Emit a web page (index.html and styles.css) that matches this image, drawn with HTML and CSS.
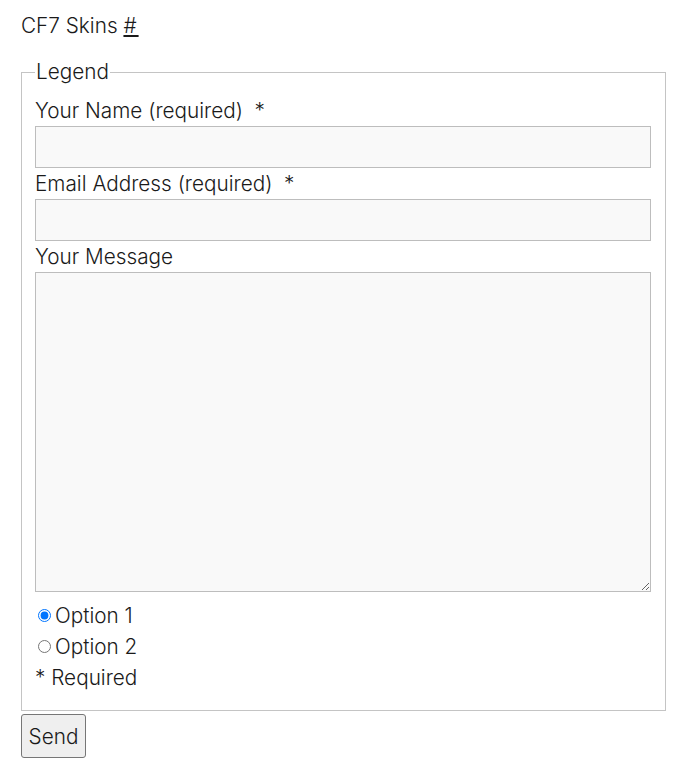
FILE: index.html
```html
<!DOCTYPE html>
<html>
<head>
<meta charset="utf-8">
<link rel="stylesheet" href="styles.css">
</head>
<body>
<div class="page">
  <h2 class="title">CF7 Skins <a href="#" class="anchor">#</a></h2>
  <form class="form">
    <fieldset class="set">
      <legend class="legend">Legend</legend>
      <label class="label">Your Name (required) &nbsp;*</label>
      <input class="field" type="text">
      <label class="label">Email Address (required) &nbsp;*</label>
      <input class="field" type="text">
      <label class="label">Your Message</label>
      <textarea class="area"></textarea>
      <div class="options">
        <label class="opt"><input type="radio" name="o" checked class="radio">Option 1</label>
        <label class="opt"><input type="radio" name="o" class="radio">Option 2</label>
      </div>
      <p class="req">* Required</p>
    </fieldset>
    <button type="button" class="send">Send</button>
  </form>
</div>
</body>
</html>
```
FILE: styles.css
```css
html, body { margin: 0; padding: 0; background: #fff; }
body {
  font-family: Inter, "Noto Sans", sans-serif;
  font-weight: 300;
  color: #1a1a1a;
  font-size: 20.75px;
}
.page { padding: 10px 18px 0 21px; }
.title {
  margin: 0 0 17px;
  font-size: 20.75px;
  font-weight: 300;
  line-height: 31px;
}
.anchor { color: #1a1a1a; text-decoration: underline; letter-spacing: 2px; }
.form { margin: 0; }
.set {
  margin: 0 0 3px;
  border: 1px solid #c4c4c4;
  padding: 9px 14px 17px 13px;
}
.legend { padding: 0 1px; line-height: 28px; }
.label { display: block; line-height: 31px; }
.field, .area {
  display: block;
  box-sizing: border-box;
  width: 100%;
  border: 1px solid #bdbdbd;
  background: #f9f9f9;
  margin: 0;
  font: inherit;
}
.field { height: 42px; }
.area { height: 320px; resize: vertical; margin-bottom: 8px; }
.options { display: flex; flex-direction: column; }
.opt { display: flex; align-items: center; line-height: 31px; }
.radio { margin: 0 4px 0 3px; width: 13px; height: 13px; }
.req { margin: 0; line-height: 31px; }
.send {
  font: inherit;
  color: #1a1a1a;
  background: #efefef;
  border: 1px solid #767676;
  border-radius: 3px;
  padding: 0 6px;
  height: 44px;
  width: 65px;
}
```
